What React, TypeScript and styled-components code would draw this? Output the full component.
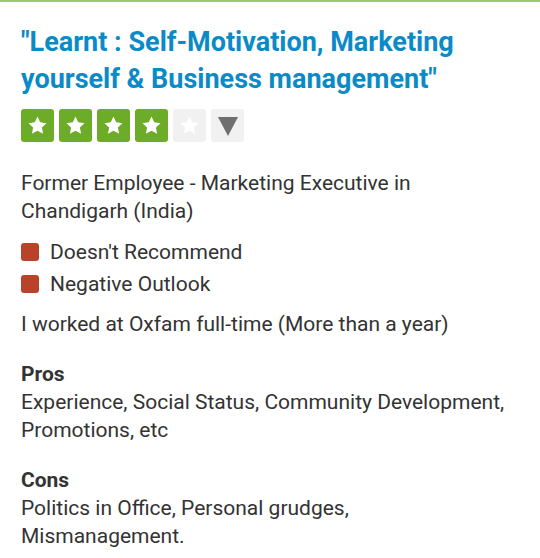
import React from 'react'
import styled, { createGlobalStyle } from 'styled-components'

const GlobalStyle = createGlobalStyle`
  html, body {
    margin: 0;
    padding: 0;
    background: #fff;
  }
  body {
    font-family: Roboto, 'Noto Sans', sans-serif;
    color: #333;
  }
`

const Page = styled.article`
  width: 540px;
  min-height: 558px;
  border-top: 2px solid #9dc86f;
  box-sizing: border-box;
  padding: 22px 30px 0 21px;
`

const Title = styled.h1`
  margin: 0;
  font-size: 27px;
  line-height: 37px;
  font-weight: 700;
  color: #0b8ac8;
`

const Rating = styled.div`
  display: flex;
  gap: 5px;
  margin-top: 11px;
`

const StarBox = styled.span<{ $on?: boolean }>`
  width: 33px;
  height: 33px;
  border-radius: 3px;
  display: flex;
  align-items: center;
  justify-content: center;
  background: ${p => (p.$on ? '#6cac29' : '#f1f1f1')};
`

const Caret = styled.span`
  width: 0;
  height: 0;
  border-left: 10px solid transparent;
  border-right: 10px solid transparent;
  border-top: 19px solid #6f6f6f;
  margin-top: 1px;
`

const Text = styled.p<{ $top?: number }>`
  margin: ${p => p.$top ?? 0}px 0 0;
  font-size: 21px;
  line-height: 28px;
  color: #333;
`

const Flags = styled.ul`
  list-style: none;
  margin: 13px 0 0;
  padding: 0;
  display: grid;
  gap: 4px;
`

const Flag = styled.li`
  display: flex;
  align-items: center;
  gap: 11px;
  font-size: 21px;
  line-height: 28px;
  color: #333;
`

const Square = styled.span`
  width: 18px;
  height: 18px;
  border-radius: 3px;
  background: #b8432a;
  flex-shrink: 0;
`

const SectionTitle = styled.h3`
  margin: 22px 0 0;
  font-size: 21px;
  line-height: 28px;
  font-weight: 700;
  color: #333;
`

const Star = ({ on }: { on: boolean }) => (
  <StarBox $on={on}>
    <svg width="21" height="21" viewBox="0 0 24 24">
      <path
        d="M12 1.8l3.1 6.6 7.2.9-5.3 5 1.4 7.1L12 17.9l-6.4 3.5 1.4-7.1-5.3-5 7.2-.9z"
        fill="#fff"
      />
    </svg>
  </StarBox>
)

const App: React.FC = () => {
  const stars = [true, true, true, true, false]

  return (
    <Page>
      <GlobalStyle />
      <Title>
        "Learnt : Self-Motivation, Marketing yourself &amp; Business
        management"
      </Title>
      <Rating>
        {stars.map((on, i) => (
          <Star key={i} on={on} />
        ))}
        <StarBox>
          <Caret />
        </StarBox>
      </Rating>

      <Text $top={27}>
        Former Employee - Marketing Executive in Chandigarh (India)
      </Text>

      <Flags>
        <Flag>
          <Square />
          Doesn't Recommend
        </Flag>
        <Flag>
          <Square />
          Negative Outlook
        </Flag>
      </Flags>

      <Text $top={12}>I worked at Oxfam full-time (More than a year)</Text>

      <SectionTitle>Pros</SectionTitle>
      <Text>
        Experience, Social Status, Community Development, Promotions, etc
      </Text>

      <SectionTitle>Cons</SectionTitle>
      <Text>Politics in Office, Personal grudges, Mismanagement.</Text>
    </Page>
  )
}

export default App
